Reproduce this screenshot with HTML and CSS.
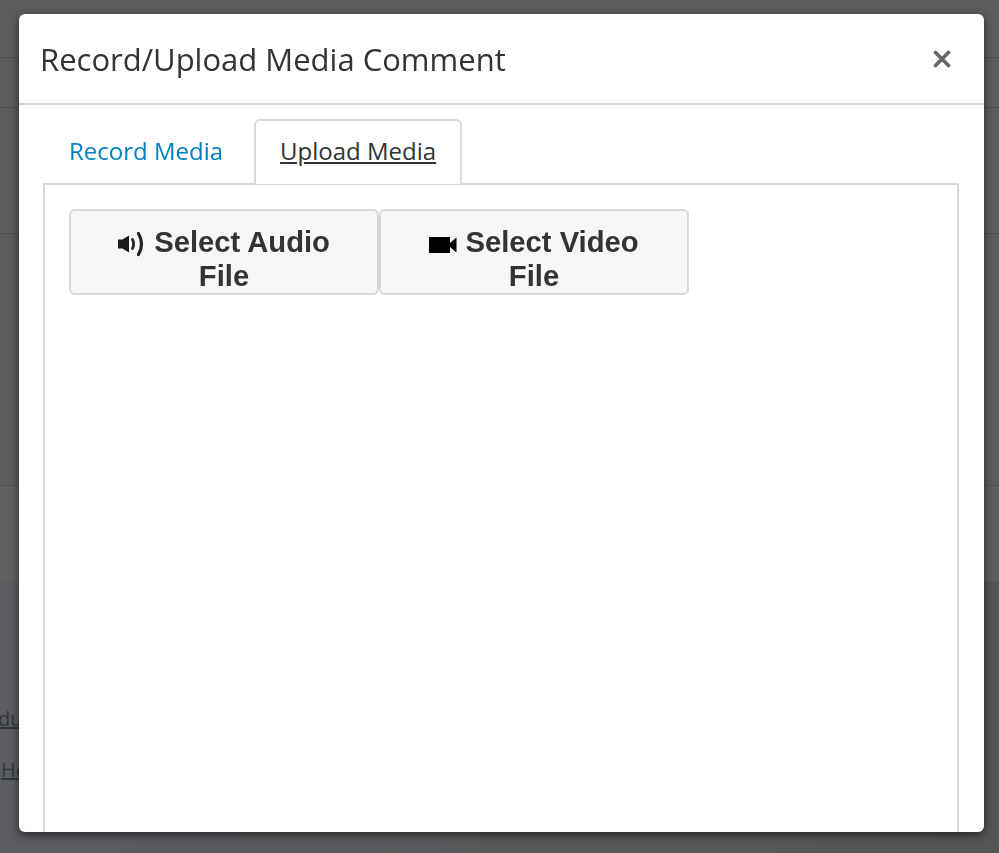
FILE: index.html
```html
<!DOCTYPE html>
<html lang="en">
<head>
  <meta charset="UTF-8" />
  <title>Record/Upload Media Comment</title>
  <link rel="stylesheet" href="styles.css">
</head>
<body>
  <div class="page">
    <div class="page-row row-a"></div>
    <div class="page-row row-b"></div>
    <div class="page-row row-c"></div>
    <div class="page-row row-d"></div>
    <div class="page-band"></div>
    <div class="page-links">
      <a class="page-link link-a">du</a>
      <a class="page-link link-b">He</a>
    </div>
  </div>

  <div class="modal">
    <div class="modal-header">
      <h1>Record/Upload Media Comment</h1>
      <button class="close" aria-label="Close">
        <svg width="18" height="18" viewBox="0 0 18 18"><path d="M2.5 2.5L15.5 15.5M15.5 2.5L2.5 15.5" stroke="#666" stroke-width="3.6" stroke-linecap="round"/></svg>
      </button>
    </div>
    <div class="modal-body">
      <div class="tabs">
        <a class="tab">Record Media</a>
        <a class="tab active">Upload Media</a>
      </div>
      <div class="panel">
        <button class="file-btn">
          <svg class="icon" width="28" height="26" viewBox="0 0 28 26"><path d="M0 8.500h4.500L11 4.500v17l-6.500-4H0z" fill="#1a1a1a"/><path d="M14.500 8.500q2.200 4.500 0 9" fill="none" stroke="#222" stroke-width="2.800" stroke-linecap="round"/><path d="M20.500 2.500q6 10.500 0 21" fill="none" stroke="#222" stroke-width="3.200" stroke-linecap="round"/></svg>
          Select Audio File
        </button>
        <button class="file-btn">
          <svg class="icon cam" width="28" height="18" viewBox="0 0 28 18"><path d="M0 1h21v16H0zM21 7L27.500 1.500v15L21 11z" fill="#000"/></svg>
          Select Video File
        </button>
      </div>
    </div>
  </div>
</body>
</html>
```
FILE: styles.css
```css
* {
  box-sizing: border-box;
}

html, body {
  height: 100%;
}

body {
  margin: 0;
  background: #5c5c5c;
  font-family: "Open Sans", sans-serif;
  overflow: hidden;
}

.page-row {
  border-bottom: 1px solid #505050;
}

.row-a { height: 58px; }
.row-b { height: 50px; }
.row-c { height: 126px; }
.row-d { height: 252px; background: #5c5c5c; }

.page-band {
  height: 95px;
  background: linear-gradient(90deg, #5f6060, #5b5e5e);
}

.page-links {
  height: 272px;
  background: linear-gradient(90deg, #5a5c60, #555555);
  padding-top: 124px;
  font-size: 20px;
  color: #33373d;
}

.page-link {
  display: block;
  text-decoration: underline;
  line-height: 27px;
}

.link-a { margin-left: -2px; }
.link-b { margin-left: 1px; margin-top: 24px; }

.modal {
  position: fixed;
  left: 19px;
  top: 14px;
  width: 965px;
  height: 818px;
  background: #fff;
  border-radius: 6px;
  box-shadow: 0 3px 10px rgba(0, 0, 0, 0.55);
  overflow: hidden;
}

.modal-header {
  height: 91px;
  border-bottom: 2px solid #d6d6d6;
  display: flex;
  align-items: center;
  justify-content: space-between;
  padding: 0 33px 0 21px;
}

h1 {
  margin: 0;
  font-size: 31px;
  font-weight: 400;
  color: #333;
}

.close {
  border: none;
  background: none;
  padding: 0;
  display: flex;
}

.modal-body {
  padding: 14px 25px 0 24px;
}

.tabs {
  display: flex;
  height: 64px;
}

.tab {
  font-size: 24px;
  color: #0081c2;
  padding: 0 24px;
  line-height: 60px;
  height: 65px;
  border: 2px solid transparent;
  border-bottom: none;
  border-radius: 6px 6px 0 0;
  position: relative;
}

.tab.active {
  margin-left: 5px;
  color: #333;
  background: #fff;
  border-color: #d9d9d9;
  text-decoration: underline;
  z-index: 1;
}

.panel {
  border: 2px solid #d9d9d9;
  height: 700px;
  padding: 24px;
  display: flex;
  align-items: flex-start;
}

.file-btn {
  width: 310px;
  height: 86px;
  background: #f6f6f6;
  border: 2px solid #d8d8d8;
  border-radius: 6px;
  font-family: "Liberation Sans", Arial, sans-serif;
  font-size: 29.2px;
  font-weight: 700;
  line-height: 34px;
  color: #333;
  padding: 13px 30px 0;
}

.icon {
  vertical-align: -5px;
}

.icon.cam {
  vertical-align: -2px;
}
```
